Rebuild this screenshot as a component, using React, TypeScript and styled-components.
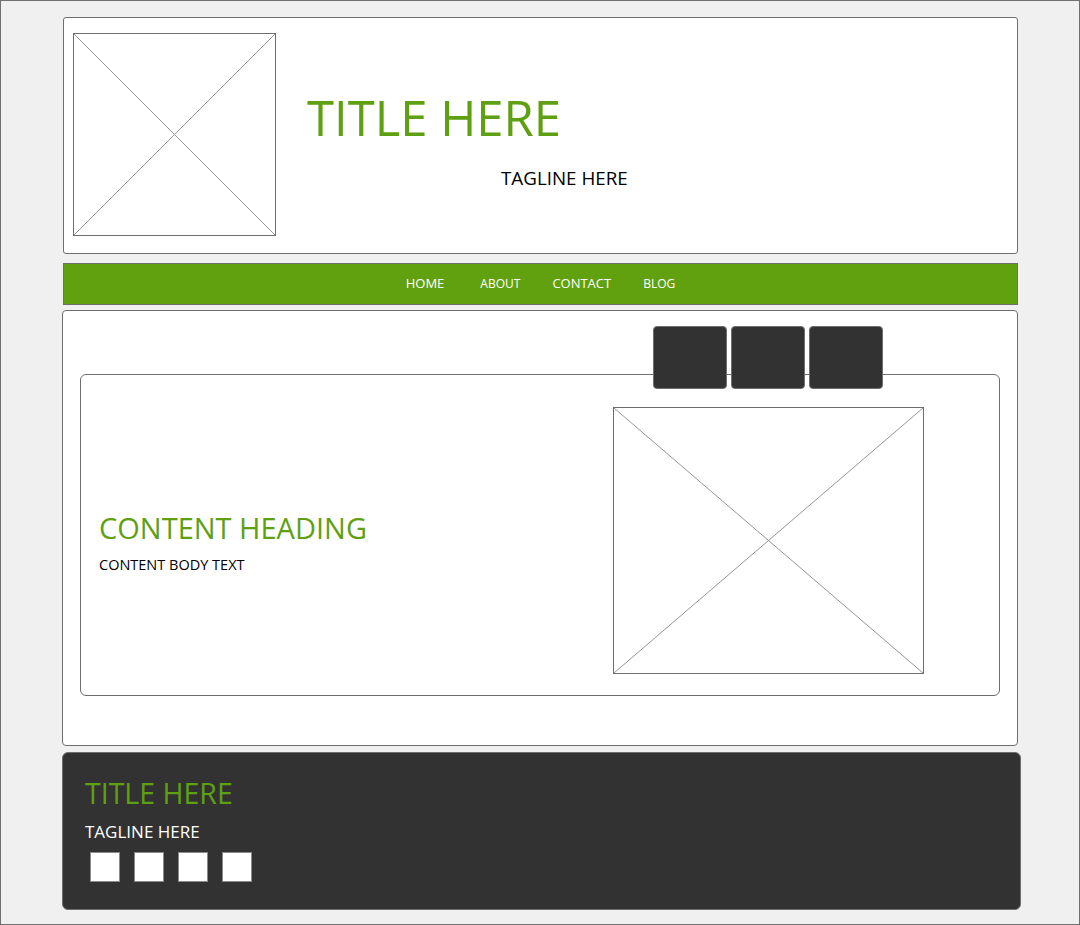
import styled, { createGlobalStyle } from "styled-components";

const GlobalStyle = createGlobalStyle`
  html, body {
    margin: 0;
    padding: 0;
    background: #f0f0f0;
  }
  body {
    font-family: "Open Sans", "Noto Sans", sans-serif;
  }
`;

const navItems = [
  { label: "HOME", size: 13 },
  { label: "ABOUT", size: 12 },
  { label: "CONTACT", size: 13 },
  { label: "BLOG", size: 12 },
];

const Placeholder = ({ width, height }: { width: number; height: number }) => (
  <PlaceholderBox $width={width} $height={height}>
    <svg width="100%" height="100%" viewBox="0 0 100 100" preserveAspectRatio="none">
      <line x1="0" y1="0" x2="100" y2="100" stroke="#7a7a7a" strokeWidth="0.8" vectorEffect="non-scaling-stroke" />
      <line x1="100" y1="0" x2="0" y2="100" stroke="#7a7a7a" strokeWidth="0.8" vectorEffect="non-scaling-stroke" />
    </svg>
  </PlaceholderBox>
);

const App = () => {
  return (
    <>
      <GlobalStyle />
      <Page>
        <Header>
          <Placeholder width={203} height={203} />
          <Brand>
            <SiteTitle>TITLE HERE</SiteTitle>
            <Tagline>TAGLINE HERE</Tagline>
          </Brand>
        </Header>

        <NavBar>
          {navItems.map((item) => (
            <NavLink key={item.label} $size={item.size}>
              {item.label}
            </NavLink>
          ))}
        </NavBar>

        <Main>
          <TabRow>
            <Tab />
            <Tab />
            <Tab />
          </TabRow>
          <ContentCard>
            <ContentText>
              <ContentHeading>CONTENT HEADING</ContentHeading>
              <ContentBody>CONTENT BODY TEXT</ContentBody>
            </ContentText>
            <Placeholder width={311} height={267} />
          </ContentCard>
        </Main>

        <Footer>
          <FooterTitle>TITLE HERE</FooterTitle>
          <FooterTagline>TAGLINE HERE</FooterTagline>
          <SocialRow>
            <SocialBox />
            <SocialBox />
            <SocialBox />
            <SocialBox />
          </SocialRow>
        </Footer>
      </Page>
    </>
  );
};

export default App;

const Page = styled.div`
  width: 1080px;
  height: 925px;
  box-sizing: border-box;
  border: 1px solid #707070;
  background: #f0f0f0;
  padding: 16px 0 0 61px;
  display: flex;
  flex-direction: column;
  align-items: flex-start;
`;

const PlaceholderBox = styled.div<{ $width: number; $height: number }>`
  width: ${({ $width }) => $width}px;
  height: ${({ $height }) => $height}px;
  box-sizing: border-box;
  border: 1px solid #6e6e6e;
  flex-shrink: 0;
  background: #fff;

  svg {
    display: block;
  }
`;

const Header = styled.header`
  width: 955px;
  height: 237px;
  box-sizing: border-box;
  margin-left: 1px;
  border: 1px solid #6e6e6e;
  border-radius: 3px;
  background: #fff;
  padding: 15px 0 0 9px;
  display: flex;
  align-items: flex-start;
`;

const Brand = styled.div`
  margin-left: 31px;
  padding-top: 60px;
  display: flex;
  flex-direction: column;
`;

const SiteTitle = styled.h1`
  margin: 0;
  font-size: 49px;
  font-weight: 400;
  line-height: 1;
  color: #5fa013;
`;

const Tagline = styled.p`
  margin: 27px 0 0 194px;
  font-size: 18.8px;
  line-height: 1;
  color: #000;
`;

const NavBar = styled.nav`
  width: 955px;
  height: 42px;
  box-sizing: border-box;
  margin: 9px 0 0 1px;
  border: 1px solid #6e6e6e;
  background: #61a10f;
  display: flex;
  align-items: baseline;
  justify-content: center;
  gap: 32px;
  padding: 12px 0 0 0;
`;

const NavLink = styled.span<{ $size: number }>`
  color: #fff;
  font-size: ${({ $size }) => $size}px;
  line-height: 14px;
  cursor: pointer;

  &:first-child {
    margin-right: 4px;
  }
`;

const Main = styled.main`
  width: 956px;
  height: 436px;
  box-sizing: border-box;
  margin-top: 5px;
  border: 1px solid #6e6e6e;
  border-radius: 4px;
  background: #fff;
  padding: 15px 17px 0 17px;
  display: flex;
  flex-direction: column;
`;

const TabRow = styled.div`
  position: relative;
  z-index: 1;
  display: flex;
  gap: 4px;
  margin: 0 0 -15px 573px;
`;

const Tab = styled.div`
  width: 74px;
  height: 63px;
  box-sizing: border-box;
  border: 1px solid #6e6e6e;
  border-radius: 4px;
  background: #323232;
`;

const ContentCard = styled.section`
  height: 322px;
  box-sizing: border-box;
  border: 1px solid #6e6e6e;
  border-radius: 6px;
  background: #fff;
  padding: 32px 75px 0 18px;
  display: flex;
  align-items: flex-start;
`;

const ContentText = styled.div`
  flex: 1;
  padding-top: 104px;
`;

const ContentHeading = styled.h2`
  margin: 0;
  font-size: 29px;
  font-weight: 400;
  line-height: 1.2;
  color: #5fa013;
`;

const ContentBody = styled.p`
  margin: 12px 0 0;
  font-size: 14.5px;
  line-height: 1;
  color: #000;
`;

const Footer = styled.footer`
  width: 959px;
  height: 158px;
  box-sizing: border-box;
  margin-top: 6px;
  border: 1px solid #6e6e6e;
  border-radius: 6px;
  background: #323232;
  padding: 23px 0 0 22px;
`;

const FooterTitle = styled.h3`
  margin: 0;
  font-size: 28.5px;
  font-weight: 400;
  line-height: 1.2;
  color: #5fa013;
`;

const FooterTagline = styled.p`
  margin: 12px 0 0;
  font-size: 17px;
  line-height: 1.2;
  color: #fff;
`;

const SocialRow = styled.div`
  display: flex;
  gap: 14px;
  margin: 9px 0 0 5px;
`;

const SocialBox = styled.div`
  width: 30px;
  height: 30px;
  box-sizing: border-box;
  border: 1px solid #8a8a8a;
  background: #fff;
`;
